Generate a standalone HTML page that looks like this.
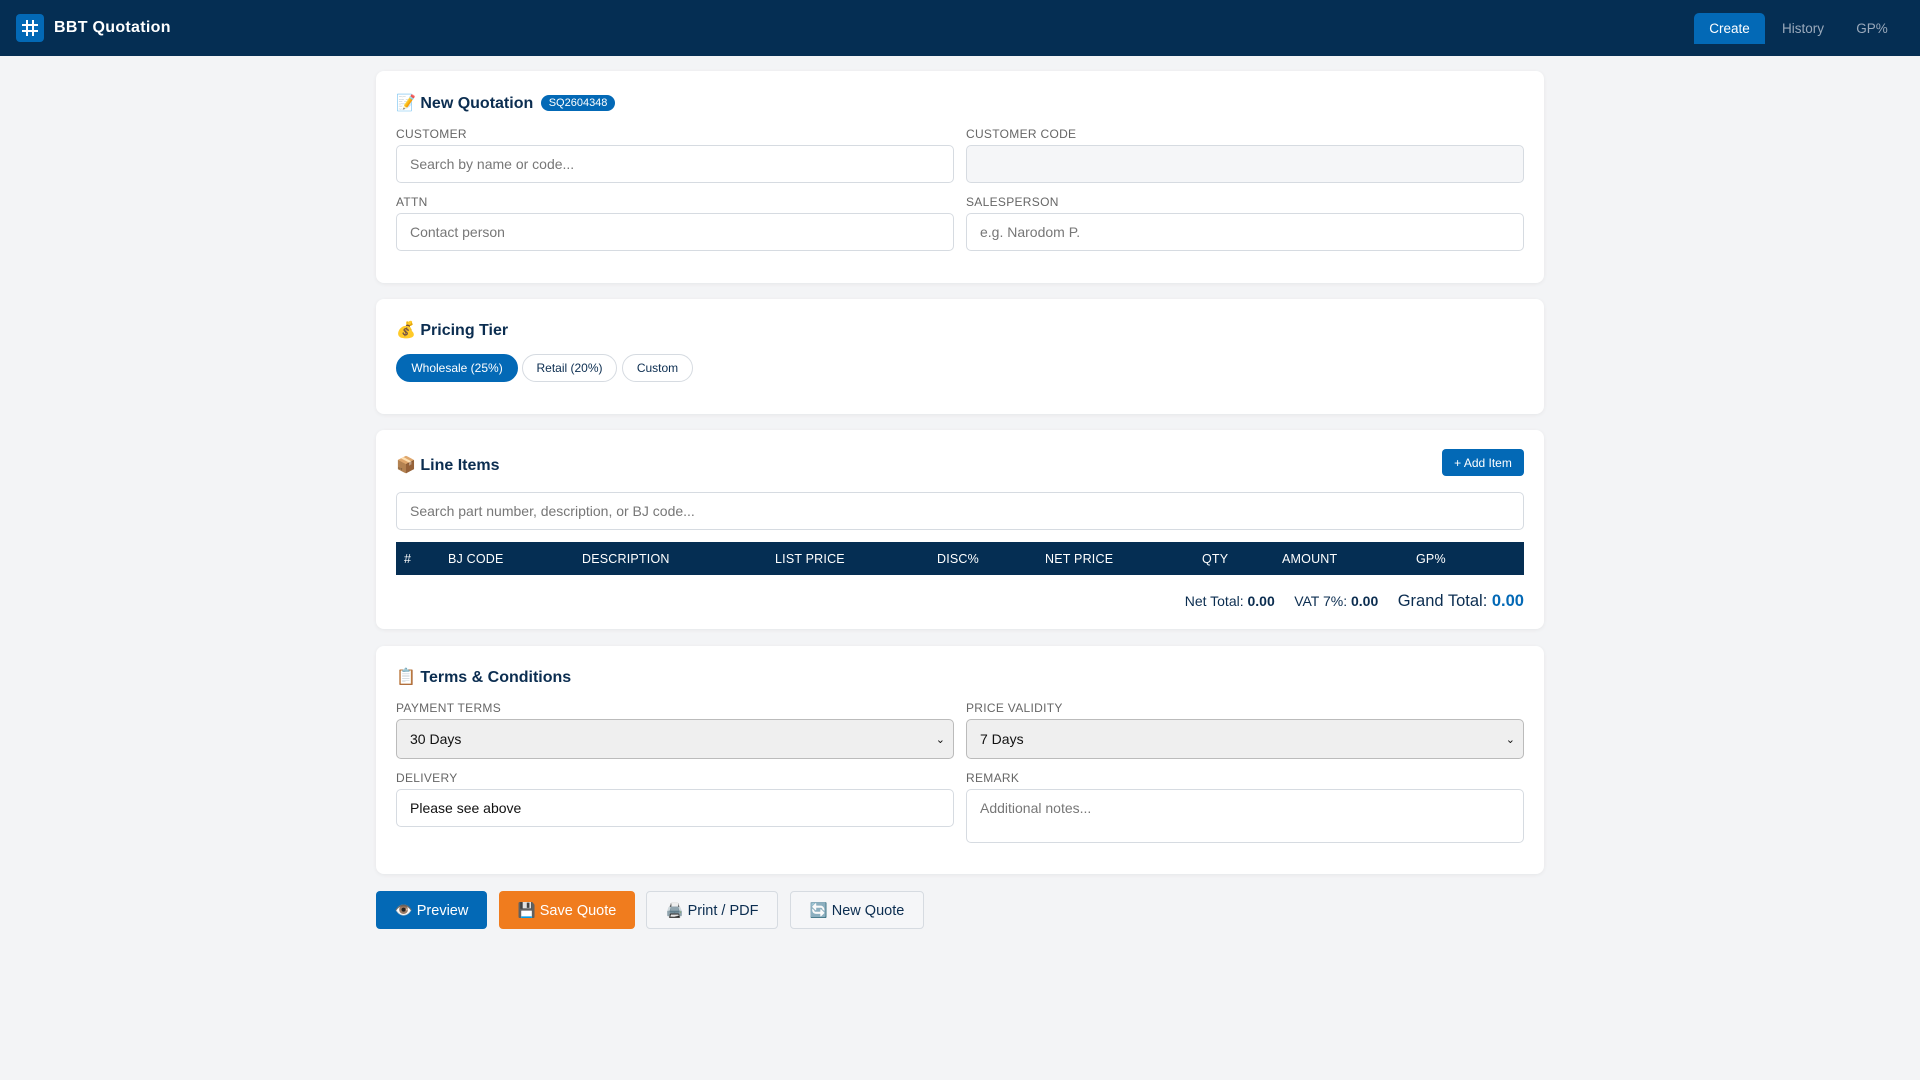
<!DOCTYPE html>
<html><head><meta charset="utf-8"><style>
*{box-sizing:border-box;margin:0;padding:0}
body{width:1920px;height:1080px;background:#f3f4f6;font-family:"Liberation Sans","Noto Sans CJK SC",sans-serif;color:#0b2d50;position:relative;overflow:hidden}
.hdr{position:absolute;left:0;top:0;width:1920px;height:56px;background:#052e53}
.logo{position:absolute;left:16px;top:14px;width:28px;height:28px;background:#0369b6;border-radius:4px}
.brand{position:absolute;left:54px;top:19px;color:#fff;font-weight:bold;font-size:16px;letter-spacing:.3px}
.nav{position:absolute;top:13px;height:31px;line-height:31px;font-size:13.5px;color:#9aa9bb;text-align:center}
.card{position:absolute;left:376px;width:1168px;background:#fff;border-radius:8px;box-shadow:0 1px 4px rgba(0,0,0,.06)}
.title{position:absolute;left:20px;font-size:16px;font-weight:bold;color:#0b2d50}
.lbl{position:absolute;font-size:12px;color:#666;letter-spacing:.3px}
.inp{position:absolute;border:1px solid #d6dbe1;border-radius:5px;background:#fff;font-size:14px;color:#777;padding-left:13px;display:flex;align-items:center}
.pill{position:absolute;top:55px;height:28px;border:1px solid #d6dbe1;border-radius:14px;font-size:12px;display:flex;align-items:center;justify-content:center;color:#0b2d50}
.th{position:absolute;top:10px;font-size:12.5px;color:#fff;letter-spacing:.2px}
.btn{position:absolute;top:891px;height:38px;border-radius:4px;font-size:14.5px;display:flex;align-items:center;justify-content:center}
</style></head><body>
<div class="hdr">
<div class="logo"><svg width="28" height="28" viewBox="0 0 28 28"><g stroke="#fff" stroke-width="2"><line x1="11" y1="6" x2="11" y2="22"/><line x1="17" y1="6" x2="17" y2="22"/><line x1="6" y1="11" x2="22" y2="11"/><line x1="6" y1="17" x2="22" y2="17"/></g></svg></div>
<div class="brand">BBT Quotation</div>
<div class="nav" style="left:1694px;width:71px;background:#0369b6;color:#fff;border-radius:5px 5px 0 0">Create</div>
<div class="nav" style="left:1774px;width:58px">History</div>
<div class="nav" style="left:1842px;width:60px">GP%</div>
</div>

<div class="card" style="top:71px;height:212px">
<div class="title" style="top:22px">📝 New Quotation <span style="display:inline-block;vertical-align:2px;background:#0369b6;color:#fff;font-size:11px;font-weight:normal;padding:2px 8px;border-radius:9px;margin-left:3px">SQ2604348</span></div>
<div class="lbl" style="left:20px;top:56px">CUSTOMER</div>
<div class="inp" style="left:20px;top:74px;width:558px;height:38px">Search by name or code...</div>
<div class="lbl" style="left:590px;top:56px">CUSTOMER CODE</div>
<div class="inp" style="left:590px;top:74px;width:558px;height:38px;background:#f5f6f8"></div>
<div class="lbl" style="left:20px;top:124px">ATTN</div>
<div class="inp" style="left:20px;top:142px;width:558px;height:38px">Contact person</div>
<div class="lbl" style="left:590px;top:124px">SALESPERSON</div>
<div class="inp" style="left:590px;top:142px;width:558px;height:38px">e.g. Narodom P.</div>
</div>

<div class="card" style="top:299px;height:115px">
<div class="title" style="top:21px">💰 Pricing Tier</div>
<div class="pill" style="left:20px;width:122px;background:#0369b6;color:#fff;border-color:#0369b6">Wholesale (25%)</div>
<div class="pill" style="left:146px;width:95px">Retail (20%)</div>
<div class="pill" style="left:246px;width:71px">Custom</div>
</div>

<div class="card" style="top:430px;height:199px">
<div class="title" style="top:25px">📦 Line Items</div>
<div style="position:absolute;left:1066px;top:19px;width:82px;height:27px;background:#0369b6;color:#fff;border-radius:4px;font-size:12px;display:flex;align-items:center;justify-content:center">+ Add Item</div>
<div class="inp" style="left:20px;top:62px;width:1128px;height:38px">Search part number, description, or BJ code...</div>
<div style="position:absolute;left:20px;top:112px;width:1128px;height:33px;background:#052e53">
<div class="th" style="left:8px">#</div><div class="th" style="left:52px">BJ CODE</div><div class="th" style="left:186px">DESCRIPTION</div><div class="th" style="left:379px">LIST PRICE</div><div class="th" style="left:541px">DISC%</div><div class="th" style="left:649px">NET PRICE</div><div class="th" style="left:806px">QTY</div><div class="th" style="left:886px">AMOUNT</div><div class="th" style="left:1020px">GP%</div>
</div>
<div style="position:absolute;right:20px;top:162px;font-size:14px;color:#0b2d50;white-space:nowrap">Net Total: <b>0.00</b>&nbsp;&nbsp;&nbsp;&nbsp; VAT 7%: <b>0.00</b>&nbsp;&nbsp;&nbsp;&nbsp; <span style="font-size:16.5px">Grand Total: <b style="color:#0369b6">0.00</b></span></div>
</div>

<div class="card" style="top:646px;height:228px">
<div class="title" style="top:21px">📋 Terms &amp; Conditions</div>
<div class="lbl" style="left:20px;top:55px">PAYMENT TERMS</div>
<div class="inp" style="left:20px;top:73px;width:558px;height:40px;background:#efefef;border-color:#bbb;color:#111">30 Days<span style="position:absolute;right:8px;font-size:11px">⌄</span></div>
<div class="lbl" style="left:590px;top:55px">PRICE VALIDITY</div>
<div class="inp" style="left:590px;top:73px;width:558px;height:40px;background:#efefef;border-color:#bbb;color:#111">7 Days<span style="position:absolute;right:8px;font-size:11px">⌄</span></div>
<div class="lbl" style="left:20px;top:125px">DELIVERY</div>
<div class="inp" style="left:20px;top:143px;width:558px;height:38px;color:#111">Please see above</div>
<div class="lbl" style="left:590px;top:125px">REMARK</div>
<div class="inp" style="left:590px;top:143px;width:558px;height:54px;align-items:flex-start;padding-top:10px">Additional notes...</div>
</div>

<div class="btn" style="left:376px;width:111px;background:#0369b6;color:#fff">👁️ Preview</div>
<div class="btn" style="left:499px;width:136px;background:#f07c1e;color:#fff">💾 Save Quote</div>
<div class="btn" style="left:646px;width:132px;border:1px solid #d6dbe1;background:#f5f6f8">🖨️ Print / PDF</div>
<div class="btn" style="left:790px;width:134px;border:1px solid #d6dbe1;background:#f5f6f8">🔄 New Quote</div>
</body></html>
